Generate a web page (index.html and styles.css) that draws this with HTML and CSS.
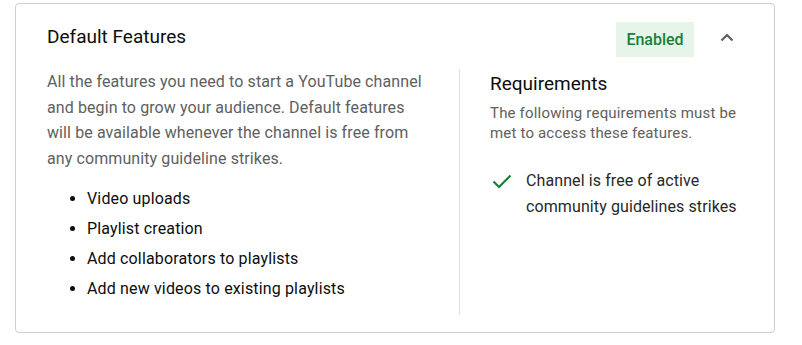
FILE: index.html
```html
<!DOCTYPE html>
<html>
<head>
<meta charset="utf-8">
<link rel="stylesheet" href="styles.css">
</head>
<body>
<div class="card">
  <div class="header">
    <h2 class="title">Default Features</h2>
    <div class="actions">
      <span class="badge">Enabled</span>
      <svg class="chev" width="24" height="24" viewBox="0 0 24 24"><path d="M6.5 15.5 L12 10 L17.5 15.5" fill="none" stroke="#606060" stroke-width="2.2"/></svg>
    </div>
  </div>
  <div class="body">
    <div class="left">
      <p class="desc">All the features you need to start a YouTube channel and begin to grow your audience. Default features will be available whenever the channel is free from any community guideline strikes.</p>
      <ul class="list">
        <li>Video uploads</li>
        <li>Playlist creation</li>
        <li>Add collaborators to playlists</li>
        <li>Add new videos to existing playlists</li>
      </ul>
    </div>
    <div class="right">
      <h3 class="req-title">Requirements</h3>
      <p class="req-desc">The following requirements must be met to access these features.</p>
      <div class="req-item">
        <svg class="check" width="24" height="24" viewBox="0 0 24 24"><path d="M3.5 12.5 L9 18 L20.5 6.5" fill="none" stroke="#188038" stroke-width="2.2"/></svg>
        <span>Channel is free of active community guidelines strikes</span>
      </div>
    </div>
  </div>
</div>
</body>
</html>
```
FILE: styles.css
```css
* { box-sizing: border-box; }
body {
  margin: 0;
  background: #fff;
  font-family: Roboto, "Noto Sans", sans-serif;
  color: #0d0d0d;
}
.card {
  margin: 3px 0 0 15px;
  width: 760px;
  height: 330px;
  border: 1px solid #cfcfcf;
  border-radius: 4px;
  padding: 0 35px 0 31px;
}
.header {
  display: flex;
  justify-content: space-between;
  align-items: flex-start;
  padding-top: 18px;
  height: 65px;
}
.title {
  margin: 2px 0 0;
  font-size: 19px;
  font-weight: 400;
  line-height: 26px;
  color: #0d0d0d;
}
.actions {
  display: flex;
  align-items: center;
}
.badge {
  background: #e6f4ea;
  color: #188038;
  font-size: 16px;
  font-weight: 500;
  height: 35px;
  line-height: 35px;
  width: 78px;
  text-align: center;
}
.chev {
  margin-left: 21px;
  margin-top: -6px;
}
.body {
  display: flex;
}
.left {
  width: 413px;
  padding-right: 30px;
  padding-bottom: 11px;
  border-right: 1px solid #e0e0e0;
}
.desc {
  margin: 0;
  font-size: 16px;
  line-height: 25.6px;
  letter-spacing: 0.1px;
  color: #606060;
}
.list {
  margin: 13px 0 0;
  padding-left: 40px;
  font-size: 16px;
  line-height: 30px;
  letter-spacing: 0.15px;
  color: #0d0d0d;
}
.right {
  padding-left: 30px;
  flex: 1;
}
.req-title {
  margin: 3px 0 0;
  font-size: 19px;
  font-weight: 400;
  line-height: 24px;
  color: #0d0d0d;
}
.req-desc {
  margin: 7px 0 0;
  font-size: 15px;
  line-height: 20px;
  letter-spacing: 0.18px;
  color: #606060;
}
.req-item {
  display: flex;
  align-items: flex-start;
  margin-top: 25px;
  font-size: 16px;
  line-height: 26px;
  letter-spacing: 0.1px;
  color: #282828;
}
.check {
  flex: none;
  margin: 1px 12px 0 0;
}
```
